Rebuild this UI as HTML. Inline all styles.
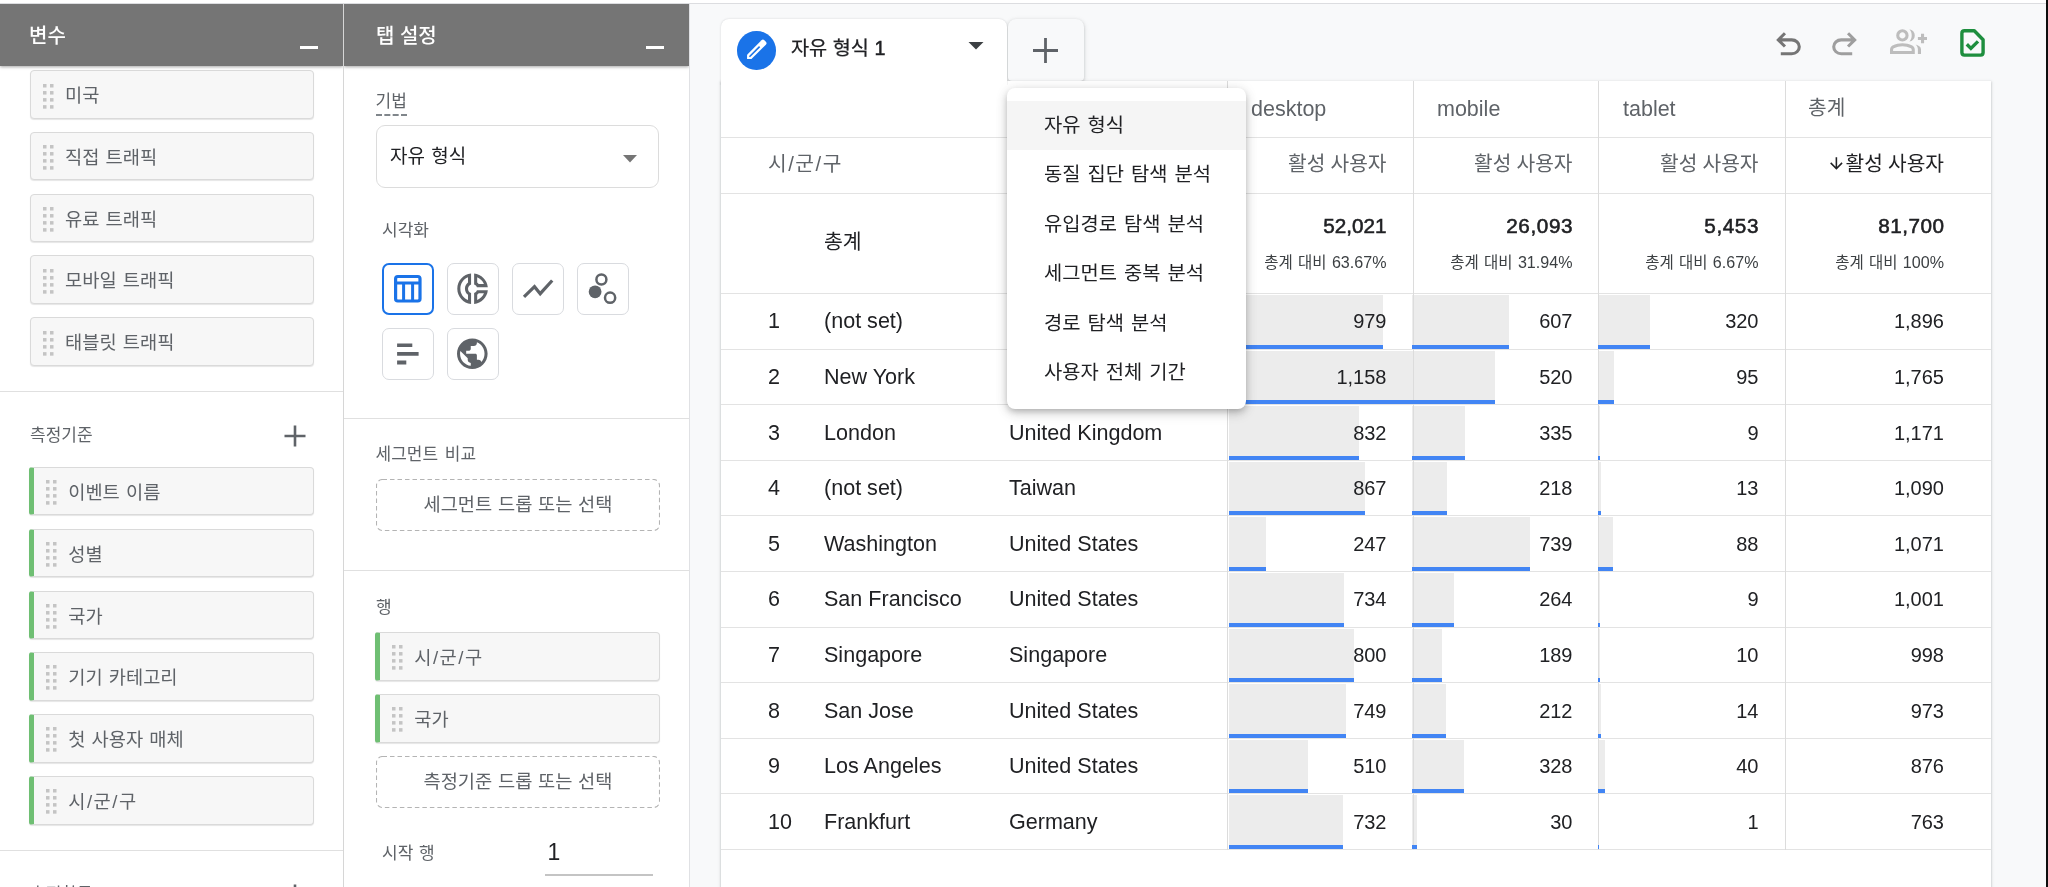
<!DOCTYPE html>
<html lang="ko">
<head>
<meta charset="utf-8">
<title>GA4 탐색 분석</title>
<style>
*{box-sizing:border-box;margin:0;padding:0}
html,body{width:2048px;height:887px;overflow:hidden;background:#fff}
body{position:relative;font-family:"Liberation Sans","Noto Sans CJK KR",sans-serif;color:#202124}
.abs{position:absolute}
#root{position:absolute;left:0;top:0;width:2048px;height:887px;overflow:hidden;will-change:transform}
#topwhite{left:0;top:0;width:2048px;height:3px;background:#fff}
#topline{left:0;top:3px;width:2048px;height:1px;background:#dcdde0}
#rightbg{left:690px;top:4px;width:1358px;height:883px;background:#f8f9fa}
#rightedge{left:2046px;top:0;width:2px;height:887px;background:#0d0d0d}
.panel{top:0;height:887px;background:#fff;overflow:hidden}
#pvar{left:0;width:343px}
#ptab{left:344px;width:345px}
#sep1{left:343px;top:4px;width:1px;height:883px;background:#d6d6d6}
#sep2{left:689px;top:4px;width:1px;height:883px;background:#e0e1e4}
.phead{left:0;top:4.300px;width:100%;height:62px;background:#757575;box-shadow:0 1px 3px rgba(0,0,0,.35)}
.phead .t{left:29px;top:16.700px;font-size:20px;font-weight:500;color:#fff;line-height:30px;white-space:nowrap}
.phead .m{top:41.600px;width:18px;height:3.500px;background:#fff}
.chip{height:48.5px;background:#f7f7f7;border:1px solid #dadada;border-radius:4px;box-shadow:0 1px 1px rgba(0,0,0,.10);font-size:18.7px;word-spacing:1px;color:#5f6368;line-height:46px;white-space:nowrap}
.chip .tx{position:absolute;left:34px;top:2px}
.chip.dim{border-left:5px solid #6fbf73;border-radius:3px 4px 4px 3px}
.chip.dim .tx{left:34.2px}
.dots{position:absolute;left:11.700px;top:12.500px;width:11px;height:25px}
.chip.dim .dots{left:11.500px;top:12px}
.sl{font-style:normal;margin:0 1.5px}
.hr{height:1px;background:#e0e0e0}
.lbl{font-size:17px;color:#5f6368;white-space:nowrap;line-height:24px;word-spacing:1px}
.drop{height:52px;font-size:18.7px;word-spacing:0.5px;color:#5f6368;text-align:center;line-height:52px;white-space:nowrap}
.drop svg{position:absolute;left:0;top:0}
.vbtn{width:52px;height:52px;border:1.500px solid #d9dbdf;border-radius:7px;background:#fff}
.vbtn.sel{border:2px solid #1a73e8}

#card{left:721px;top:81px;width:1270px;height:820px;background:#fff;box-shadow:0 1px 2px rgba(60,64,67,.25),0 1px 3px 1px rgba(60,64,67,.10)}
#tab{left:721px;top:19px;width:286px;height:66px;background:#fff;border-radius:8px 8px 0 0;box-shadow:0 0 2px rgba(60,64,67,.22);clip-path:inset(-4px -1px 0 -4px)}
#ptab2{left:1008px;top:19px;width:76px;height:62px;background:#f8f9fa;border-radius:8px 8px 4px 4px;box-shadow:0 1px 3px rgba(60,64,67,.26),0 2px 6px rgba(60,64,67,.10)}
.hl{left:721px;width:1270px;height:1px;background:#e3e3e3}
.vl{top:81px;width:1px;height:769px;background:#dcdcdc}
.th{font-size:21.5px;color:#5f6368;line-height:30px;white-space:nowrap}
.thk{font-size:20.3px;color:#5f6368;line-height:30px;white-space:nowrap;word-spacing:-0.5px}
.td{font-size:21.55px;color:#202124;line-height:30px;white-space:nowrap}
.num{font-size:20px;color:#202124;line-height:30px;white-space:nowrap;text-align:right}
.tot{font-size:20.7px;color:#202124;line-height:30px;white-space:nowrap;text-align:right;font-weight:400;-webkit-text-stroke:0.55px #202124}
.pct{font-size:15.5px;color:#3c4043;line-height:22px;white-space:nowrap;text-align:right;word-spacing:1px}
.bar{background:#ececec}
.barl{background:#4285f4;height:4px}
#menu{left:1007px;top:88px;width:239px;height:321px;background:#fff;border-radius:8px;box-shadow:0 3px 6px -1px rgba(0,0,0,.22),0 5px 12px 1px rgba(0,0,0,.09),0 1px 14px 0 rgba(0,0,0,.09)}
.mi{left:0;width:239px;height:49.5px;font-size:19.85px;line-height:48px;color:#202124;padding-left:37px;white-space:nowrap;word-spacing:1.5px}
</style>
</head>
<body>
<div id="root">
<div class="abs" id="rightbg"></div>
<div class="abs panel" id="pvar">
<div class="abs chip" style="left:30px;top:70.0px;width:284px"><svg class="dots" viewBox="0 0 11 25" fill="#c4c4c4"><rect x="0" y="0" width="3.500" height="3.500"/><rect x="7" y="0" width="3.500" height="3.500"/><rect x="0" y="7.05" width="3.500" height="3.500"/><rect x="7" y="7.05" width="3.500" height="3.500"/><rect x="0" y="14.1" width="3.500" height="3.500"/><rect x="7" y="14.1" width="3.500" height="3.500"/><rect x="0" y="21.15" width="3.500" height="3.500"/><rect x="7" y="21.15" width="3.500" height="3.500"/></svg><span class="tx">미국</span></div>
<div class="abs chip" style="left:30px;top:131.75px;width:284px"><svg class="dots" viewBox="0 0 11 25" fill="#c4c4c4"><rect x="0" y="0" width="3.500" height="3.500"/><rect x="7" y="0" width="3.500" height="3.500"/><rect x="0" y="7.05" width="3.500" height="3.500"/><rect x="7" y="7.05" width="3.500" height="3.500"/><rect x="0" y="14.1" width="3.500" height="3.500"/><rect x="7" y="14.1" width="3.500" height="3.500"/><rect x="0" y="21.15" width="3.500" height="3.500"/><rect x="7" y="21.15" width="3.500" height="3.500"/></svg><span class="tx">직접 트래픽</span></div>
<div class="abs chip" style="left:30px;top:193.5px;width:284px"><svg class="dots" viewBox="0 0 11 25" fill="#c4c4c4"><rect x="0" y="0" width="3.500" height="3.500"/><rect x="7" y="0" width="3.500" height="3.500"/><rect x="0" y="7.05" width="3.500" height="3.500"/><rect x="7" y="7.05" width="3.500" height="3.500"/><rect x="0" y="14.1" width="3.500" height="3.500"/><rect x="7" y="14.1" width="3.500" height="3.500"/><rect x="0" y="21.15" width="3.500" height="3.500"/><rect x="7" y="21.15" width="3.500" height="3.500"/></svg><span class="tx">유료 트래픽</span></div>
<div class="abs chip" style="left:30px;top:255.25px;width:284px"><svg class="dots" viewBox="0 0 11 25" fill="#c4c4c4"><rect x="0" y="0" width="3.500" height="3.500"/><rect x="7" y="0" width="3.500" height="3.500"/><rect x="0" y="7.05" width="3.500" height="3.500"/><rect x="7" y="7.05" width="3.500" height="3.500"/><rect x="0" y="14.1" width="3.500" height="3.500"/><rect x="7" y="14.1" width="3.500" height="3.500"/><rect x="0" y="21.15" width="3.500" height="3.500"/><rect x="7" y="21.15" width="3.500" height="3.500"/></svg><span class="tx">모바일 트래픽</span></div>
<div class="abs chip" style="left:30px;top:317.0px;width:284px"><svg class="dots" viewBox="0 0 11 25" fill="#c4c4c4"><rect x="0" y="0" width="3.500" height="3.500"/><rect x="7" y="0" width="3.500" height="3.500"/><rect x="0" y="7.05" width="3.500" height="3.500"/><rect x="7" y="7.05" width="3.500" height="3.500"/><rect x="0" y="14.1" width="3.500" height="3.500"/><rect x="7" y="14.1" width="3.500" height="3.500"/><rect x="0" y="21.15" width="3.500" height="3.500"/><rect x="7" y="21.15" width="3.500" height="3.500"/></svg><span class="tx">태블릿 트래픽</span></div>
<div class="abs hr" style="left:0;top:391px;width:343px"></div>
<div class="abs lbl" style="left:30px;top:424px">측정기준</div>
<svg class="abs" style="left:283px;top:424px" width="24" height="24" viewBox="0 0 24 24"><path d="M12 1.5v21M1.5 12h21" stroke="#5f6368" stroke-width="2.6" fill="none"/></svg>
<div class="abs chip dim" style="left:29px;top:466.8px;width:285px"><svg class="dots" viewBox="0 0 11 25" fill="#c4c4c4"><rect x="0" y="0" width="3.500" height="3.500"/><rect x="7" y="0" width="3.500" height="3.500"/><rect x="0" y="7.05" width="3.500" height="3.500"/><rect x="7" y="7.05" width="3.500" height="3.500"/><rect x="0" y="14.1" width="3.500" height="3.500"/><rect x="7" y="14.1" width="3.500" height="3.500"/><rect x="0" y="21.15" width="3.500" height="3.500"/><rect x="7" y="21.15" width="3.500" height="3.500"/></svg><span class="tx">이벤트 이름</span></div>
<div class="abs chip dim" style="left:29px;top:528.65px;width:285px"><svg class="dots" viewBox="0 0 11 25" fill="#c4c4c4"><rect x="0" y="0" width="3.500" height="3.500"/><rect x="7" y="0" width="3.500" height="3.500"/><rect x="0" y="7.05" width="3.500" height="3.500"/><rect x="7" y="7.05" width="3.500" height="3.500"/><rect x="0" y="14.1" width="3.500" height="3.500"/><rect x="7" y="14.1" width="3.500" height="3.500"/><rect x="0" y="21.15" width="3.500" height="3.500"/><rect x="7" y="21.15" width="3.500" height="3.500"/></svg><span class="tx">성별</span></div>
<div class="abs chip dim" style="left:29px;top:590.5px;width:285px"><svg class="dots" viewBox="0 0 11 25" fill="#c4c4c4"><rect x="0" y="0" width="3.500" height="3.500"/><rect x="7" y="0" width="3.500" height="3.500"/><rect x="0" y="7.05" width="3.500" height="3.500"/><rect x="7" y="7.05" width="3.500" height="3.500"/><rect x="0" y="14.1" width="3.500" height="3.500"/><rect x="7" y="14.1" width="3.500" height="3.500"/><rect x="0" y="21.15" width="3.500" height="3.500"/><rect x="7" y="21.15" width="3.500" height="3.500"/></svg><span class="tx">국가</span></div>
<div class="abs chip dim" style="left:29px;top:652.35px;width:285px"><svg class="dots" viewBox="0 0 11 25" fill="#c4c4c4"><rect x="0" y="0" width="3.500" height="3.500"/><rect x="7" y="0" width="3.500" height="3.500"/><rect x="0" y="7.05" width="3.500" height="3.500"/><rect x="7" y="7.05" width="3.500" height="3.500"/><rect x="0" y="14.1" width="3.500" height="3.500"/><rect x="7" y="14.1" width="3.500" height="3.500"/><rect x="0" y="21.15" width="3.500" height="3.500"/><rect x="7" y="21.15" width="3.500" height="3.500"/></svg><span class="tx">기기 카테고리</span></div>
<div class="abs chip dim" style="left:29px;top:714.2px;width:285px"><svg class="dots" viewBox="0 0 11 25" fill="#c4c4c4"><rect x="0" y="0" width="3.500" height="3.500"/><rect x="7" y="0" width="3.500" height="3.500"/><rect x="0" y="7.05" width="3.500" height="3.500"/><rect x="7" y="7.05" width="3.500" height="3.500"/><rect x="0" y="14.1" width="3.500" height="3.500"/><rect x="7" y="14.1" width="3.500" height="3.500"/><rect x="0" y="21.15" width="3.500" height="3.500"/><rect x="7" y="21.15" width="3.500" height="3.500"/></svg><span class="tx">첫 사용자 매체</span></div>
<div class="abs chip dim" style="left:29px;top:776.05px;width:285px"><svg class="dots" viewBox="0 0 11 25" fill="#c4c4c4"><rect x="0" y="0" width="3.500" height="3.500"/><rect x="7" y="0" width="3.500" height="3.500"/><rect x="0" y="7.05" width="3.500" height="3.500"/><rect x="7" y="7.05" width="3.500" height="3.500"/><rect x="0" y="14.1" width="3.500" height="3.500"/><rect x="7" y="14.1" width="3.500" height="3.500"/><rect x="0" y="21.15" width="3.500" height="3.500"/><rect x="7" y="21.15" width="3.500" height="3.500"/></svg><span class="tx">시<i class=sl>/</i>군<i class=sl>/</i>구</span></div>
<div class="abs hr" style="left:0;top:850px;width:343px"></div>
<div class="abs lbl" style="left:30px;top:882.5px">측정항목</div>
<svg class="abs" style="left:283px;top:883px" width="24" height="24" viewBox="0 0 24 24"><path d="M12 1.5v21M1.5 12h21" stroke="#5f6368" stroke-width="2.6" fill="none"/></svg>
<div class="abs phead"><div class="abs t">변수</div><div class="abs m" style="left:300px"></div></div>
</div>
<div class="abs" id="sep1"></div>
<div class="abs panel" id="ptab">
<div class="abs lbl" style="left:31.500px;top:89px;border-bottom:2px dashed #80868b;padding-bottom:0;line-height:25px">기법</div>
<div class="abs" style="left:31.500px;top:125.400px;width:283.500px;height:62.500px;border:1.500px solid #dcdcdc;border-radius:9px;background:#fff"></div>
<div class="abs" style="left:46px;top:141.500px;font-size:19px;word-spacing:1px;line-height:30px;color:#202124;white-space:nowrap">자유 형식</div>
<svg class="abs" style="left:279px;top:155px" width="14" height="8" viewBox="0 0 14 8"><path d="M0 0h14L7 7.500z" fill="#757575"/></svg>
<div class="abs lbl" style="left:38px;top:219px">시각화</div>
<div class="abs vbtn sel" style="left:38px;top:263px"></div>
<svg class="abs" style="left:38px;top:263px" width="52" height="52" viewBox="0 0 52 52"><rect x="13.6" y="13.5" width="24.4" height="24.5" rx="2.2" fill="none" stroke="#1a73e8" stroke-width="3.2"/><path d="M13.6 20.1h24.4M21.6 20.1v17.9M30.6 20.1v17.9" fill="none" stroke="#1a73e8" stroke-width="3"/></svg>
<div class="abs vbtn" style="left:103px;top:263px"></div>
<svg class="abs" style="left:103px;top:263px" width="52" height="52" viewBox="0 0 52 52"><g transform="translate(7.24 7.34) scale(1.53)" fill="#5f6368"><path d="M14.82 11h7.13c-.47-4.72-4.23-8.48-8.95-8.95v7.130c.85.31 1.510.97 1.820 1.820zM15 4.580C17 5.400 18.600 7 19.420 9h-3.430c-.28-.37-.62-.71-.99-.99V4.580zM2 12c0 5.190 3.950 9.450 9 9.950v-7.130C9.840 14.400 9 13.300 9 12c0-1.300.84-2.400 2-2.820V2.050c-5.050.5-9 4.760-9 9.950zm7-7.420v3.440c-1.230.92-2 2.390-2 3.980 0 1.590.77 3.060 2 3.990v3.440C6.040 18.240 4 15.350 4 12c0-3.350 2.040-6.240 5-7.420zM13 14.820v7.130c4.720-.47 8.480-4.230 8.950-8.950h-7.130c-.31.85-.97 1.510-1.820 1.820zM15 15.990c.37-.28.71-.61.99-.99h3.430C18.600 17 17 18.600 15 19.420v-3.430z"/></g></svg>
<div class="abs vbtn" style="left:168px;top:263px"></div>
<svg class="abs" style="left:168px;top:263px" width="52" height="52" viewBox="0 0 52 52"><path d="M12 33.900L22.5 23.7L28.2 30.7L40.2 17.500" fill="none" stroke="#5f6368" stroke-width="3.2" stroke-linejoin="miter"/></svg>
<div class="abs vbtn" style="left:233px;top:263px"></div>
<svg class="abs" style="left:233px;top:263px" width="52" height="52" viewBox="0 0 52 52"><circle cx="18.1" cy="28.8" r="6.4" fill="#5f6368"/><circle cx="24.4" cy="16.5" r="5" fill="none" stroke="#5f6368" stroke-width="2.5"/><circle cx="33.1" cy="34.7" r="5.1" fill="none" stroke="#5f6368" stroke-width="2.5"/></svg>
<div class="abs vbtn" style="left:38px;top:328px"></div>
<svg class="abs" style="left:38px;top:328px" width="52" height="52" viewBox="0 0 52 52"><path d="M15.1 15.4h15.2v3.700H15.100zM15.100 24.1h21.5v3.700H15.100zM15.100 32.600h9.200v3.800H15.100z" fill="#5f6368"/></svg>
<div class="abs vbtn" style="left:103px;top:328px"></div>
<svg class="abs" style="left:103px;top:328px" width="52" height="52" viewBox="0 0 52 52"><g transform="translate(6.94 7.34) scale(1.53)" fill="#5f6368"><path d="M12 2C6.480 2 2 6.480 2 12s4.480 10 10 10 10-4.480 10-10S17.520 2 12 2zm-1 17.930c-3.950-.49-7-3.850-7-7.930 0-.62.08-1.210.21-1.790L9 15v1c0 1.100.9 2 2 2v1.930zm6.900-2.540c-.26-.81-1-1.390-1.900-1.390h-1v-3c0-.55-.45-1-1-1H8v-2h2c.55 0 1-.45 1-1V7h2c1.100 0 2-.9 2-2v-.41c2.930 1.190 5 4.060 5 7.410 0 2.080-.8 3.970-2.100 5.390z"/></g></svg>
<div class="abs hr" style="left:0;top:418px;width:345px"></div>
<div class="abs lbl" style="left:31.500px;top:443px;word-spacing:2px">세그먼트 비교</div>
<div class="abs drop" style="left:32px;top:479px;width:284px"><svg width="284" height="52" viewBox="0 0 284 52"><rect x="0.500" y="0.500" width="283" height="51" rx="6" fill="none" stroke="#b4b4b4" stroke-width="1.100" stroke-dasharray="4.500 3"/></svg>세그먼트 드롭 또는 선택</div>
<div class="abs hr" style="left:0;top:570px;width:345px"></div>
<div class="abs lbl" style="left:32px;top:596px">행</div>
<div class="abs chip dim" style="left:31px;top:632px;width:285px"><svg class="dots" viewBox="0 0 11 25" fill="#c4c4c4"><rect x="0" y="0" width="3.500" height="3.500"/><rect x="7" y="0" width="3.500" height="3.500"/><rect x="0" y="7.05" width="3.500" height="3.500"/><rect x="7" y="7.05" width="3.500" height="3.500"/><rect x="0" y="14.1" width="3.500" height="3.500"/><rect x="7" y="14.1" width="3.500" height="3.500"/><rect x="0" y="21.15" width="3.500" height="3.500"/><rect x="7" y="21.15" width="3.500" height="3.500"/></svg><span class="tx">시<i class=sl>/</i>군<i class=sl>/</i>구</span></div>
<div class="abs chip dim" style="left:31px;top:694px;width:285px"><svg class="dots" viewBox="0 0 11 25" fill="#c4c4c4"><rect x="0" y="0" width="3.500" height="3.500"/><rect x="7" y="0" width="3.500" height="3.500"/><rect x="0" y="7.05" width="3.500" height="3.500"/><rect x="7" y="7.05" width="3.500" height="3.500"/><rect x="0" y="14.1" width="3.500" height="3.500"/><rect x="7" y="14.1" width="3.500" height="3.500"/><rect x="0" y="21.15" width="3.500" height="3.500"/><rect x="7" y="21.15" width="3.500" height="3.500"/></svg><span class="tx">국가</span></div>
<div class="abs drop" style="left:32px;top:755.500px;width:284px"><svg width="284" height="52" viewBox="0 0 284 52"><rect x="0.500" y="0.500" width="283" height="51" rx="6" fill="none" stroke="#b4b4b4" stroke-width="1.100" stroke-dasharray="4.500 3"/></svg>측정기준 드롭 또는 선택</div>
<div class="abs lbl" style="left:38px;top:842px">시작 행</div>
<div class="abs" style="left:203.500px;top:837px;font-size:23px;line-height:30px;color:#202124">1</div>
<div class="abs" style="left:201px;top:874px;width:108px;height:1.500px;background:#c4c4c4"></div>
<div class="abs phead"><div class="abs t" style="left:32px">탭 설정</div><div class="abs m" style="left:302px"></div></div>
</div>
<div class="abs" id="sep2"></div>
<div class="abs" id="ptab2"></div>
<div class="abs" id="card"></div>
<div class="abs" id="tab"></div>
<div class="abs" style="left:737px;top:31px;width:38.6px;height:38.6px;border-radius:50%;background:#1a73e8"></div>
<svg class="abs" style="left:737px;top:31px" width="39" height="39" viewBox="0 0 39 39"><g transform="translate(19.1 19.1) rotate(45)"><path d="M-3.100 -10.700Q-3.100 -12.750 -1.050 -12.750H1.050Q3.100 -12.750 3.100 -10.700V9.650L0 12.750L-3.100 9.650Z" fill="#fff"/><rect x="-0.800" y="-5" width="1.600" height="14.400" fill="#1a73e8"/></g></svg>
<div class="abs" style="left:791px;top:33px;font-size:19.7px;font-weight:400;-webkit-text-stroke:0.25px #202124;color:#202124;line-height:30px;white-space:nowrap;word-spacing:0px">자유 형식 <span style="-webkit-text-stroke:0.5px #202124">1</span></div>
<svg class="abs" style="left:968px;top:42px" width="16" height="8" viewBox="0 0 16 8"><path d="M0.500 0h15L8 7.5z" fill="#3c4043"/></svg>
<svg class="abs" style="left:1032px;top:37.300px" width="27" height="27" viewBox="0 0 27 27"><path d="M13.5 1v25M1 13.5h25" stroke="#5f6368" stroke-width="2.800" fill="none"/></svg>
<div class="abs hl" style="top:137px"></div>
<div class="abs hl" style="top:193px"></div>
<div class="abs hl" style="top:293.0px"></div>
<div class="abs hl" style="top:348.6px"></div>
<div class="abs hl" style="top:404.2px"></div>
<div class="abs hl" style="top:459.8px"></div>
<div class="abs hl" style="top:515.4px"></div>
<div class="abs hl" style="top:571.0px"></div>
<div class="abs hl" style="top:626.6px"></div>
<div class="abs hl" style="top:682.2px"></div>
<div class="abs hl" style="top:737.8px"></div>
<div class="abs hl" style="top:793.4px"></div>
<div class="abs hl" style="top:849.0px"></div>
<div class="abs thk" style="left:768px;top:149px">시<i class=sl>/</i>군<i class=sl>/</i>구</div>
<div class="abs thk" style="left:1009px;top:149px">국가</div>
<div class="abs th" style="left:1251px;top:94px">desktop</div>
<div class="abs th" style="left:1437px;top:94px">mobile</div>
<div class="abs th" style="left:1623px;top:94px">tablet</div>
<div class="abs thk" style="left:1808px;top:93px">총계</div>
<div class="abs thk" style="left:1226.5px;width:160px;text-align:right;top:149px">활성 사용자</div>
<div class="abs thk" style="left:1412.5px;width:160px;text-align:right;top:149px">활성 사용자</div>
<div class="abs thk" style="left:1598.5px;width:160px;text-align:right;top:149px">활성 사용자</div>
<div class="abs thk" style="left:1764px;width:180px;text-align:right;top:149px;color:#202124;font-weight:400">활성 사용자</div>
<svg class="abs" style="left:1826.700px;top:153.500px" width="18.750" height="18.750" viewBox="0 0 24 24"><path d="M20 12l-1.410-1.410L13 16.170V4h-2v12.170l-5.580-5.590L4 12l8 8 8-8z" fill="#202124"/></svg>
<div class="abs td" style="left:824px;top:227px;font-weight:400;font-size:20.5px">총계</div>
<div class="abs tot" style="left:1226.5px;width:160px;top:211px;letter-spacing:0px">52,021</div>
<div class="abs pct" style="left:1216.5px;width:170px;top:251px">총계 대비 <span style="font-size:16.100px">63.67%</span></div>
<div class="abs tot" style="left:1413.1px;width:160px;top:211px;letter-spacing:0.6px">26,093</div>
<div class="abs pct" style="left:1402.5px;width:170px;top:251px">총계 대비 <span style="font-size:16.100px">31.94%</span></div>
<div class="abs tot" style="left:1599.1px;width:160px;top:211px;letter-spacing:0.6px">5,453</div>
<div class="abs pct" style="left:1588.5px;width:170px;top:251px">총계 대비 <span style="font-size:16.100px">6.67%</span></div>
<div class="abs tot" style="left:1784.5px;width:160px;top:211px;letter-spacing:0.5px">81,700</div>
<div class="abs pct" style="left:1774px;width:170px;top:251px">총계 대비 <span style="font-size:16.100px">100%</span></div>
<div class="abs td" style="left:768px;top:306px">1</div>
<div class="abs td" style="left:824px;top:306px">(not set)</div>
<div class="abs td" style="left:1009px;top:306px">United States</div>
<div class="abs bar" style="left:1229.3px;top:295.0px;width:153.7px;height:49.6px"></div>
<div class="abs bar" style="left:1411.9px;top:295.0px;width:97.1px;height:49.6px"></div>
<div class="abs bar" style="left:1598.2px;top:295.0px;width:51.5px;height:49.6px"></div>
<div class="abs num" style="left:1266.5px;width:120px;top:306px">979</div>
<div class="abs num" style="left:1452.5px;width:120px;top:306px">607</div>
<div class="abs num" style="left:1638.5px;width:120px;top:306px">320</div>
<div class="abs num" style="left:1824px;width:120px;top:306px">1,896</div>
<div class="abs td" style="left:768px;top:362px">2</div>
<div class="abs td" style="left:824px;top:362px">New York</div>
<div class="abs td" style="left:1009px;top:362px">United States</div>
<div class="abs bar" style="left:1229.3px;top:350.6px;width:182.4px;height:49.6px"></div>
<div class="abs bar" style="left:1411.9px;top:350.6px;width:83.2px;height:49.6px"></div>
<div class="abs bar" style="left:1598.2px;top:350.6px;width:15.5px;height:49.6px"></div>
<div class="abs num" style="left:1266.5px;width:120px;top:362px">1,158</div>
<div class="abs num" style="left:1452.5px;width:120px;top:362px">520</div>
<div class="abs num" style="left:1638.5px;width:120px;top:362px">95</div>
<div class="abs num" style="left:1824px;width:120px;top:362px">1,765</div>
<div class="abs td" style="left:768px;top:418px">3</div>
<div class="abs td" style="left:824px;top:418px">London</div>
<div class="abs td" style="left:1009px;top:418px">United Kingdom</div>
<div class="abs bar" style="left:1229.3px;top:406.2px;width:130.2px;height:49.6px"></div>
<div class="abs bar" style="left:1411.9px;top:406.2px;width:53.6px;height:49.6px"></div>
<div class="abs bar" style="left:1598.2px;top:406.2px;width:1.7px;height:49.6px"></div>
<div class="abs num" style="left:1266.5px;width:120px;top:418px">832</div>
<div class="abs num" style="left:1452.5px;width:120px;top:418px">335</div>
<div class="abs num" style="left:1638.5px;width:120px;top:418px">9</div>
<div class="abs num" style="left:1824px;width:120px;top:418px">1,171</div>
<div class="abs td" style="left:768px;top:473px">4</div>
<div class="abs td" style="left:824px;top:473px">(not set)</div>
<div class="abs td" style="left:1009px;top:473px">Taiwan</div>
<div class="abs bar" style="left:1229.3px;top:461.8px;width:135.8px;height:49.6px"></div>
<div class="abs bar" style="left:1411.9px;top:461.8px;width:34.9px;height:49.6px"></div>
<div class="abs bar" style="left:1598.2px;top:461.8px;width:2.4px;height:49.6px"></div>
<div class="abs num" style="left:1266.5px;width:120px;top:473px">867</div>
<div class="abs num" style="left:1452.5px;width:120px;top:473px">218</div>
<div class="abs num" style="left:1638.5px;width:120px;top:473px">13</div>
<div class="abs num" style="left:1824px;width:120px;top:473px">1,090</div>
<div class="abs td" style="left:768px;top:529px">5</div>
<div class="abs td" style="left:824px;top:529px">Washington</div>
<div class="abs td" style="left:1009px;top:529px">United States</div>
<div class="abs bar" style="left:1229.3px;top:517.4px;width:36.6px;height:49.6px"></div>
<div class="abs bar" style="left:1411.9px;top:517.4px;width:118.2px;height:49.6px"></div>
<div class="abs bar" style="left:1598.2px;top:517.4px;width:14.4px;height:49.6px"></div>
<div class="abs num" style="left:1266.5px;width:120px;top:529px">247</div>
<div class="abs num" style="left:1452.5px;width:120px;top:529px">739</div>
<div class="abs num" style="left:1638.5px;width:120px;top:529px">88</div>
<div class="abs num" style="left:1824px;width:120px;top:529px">1,071</div>
<div class="abs td" style="left:768px;top:584px">6</div>
<div class="abs td" style="left:824px;top:584px">San Francisco</div>
<div class="abs td" style="left:1009px;top:584px">United States</div>
<div class="abs bar" style="left:1229.3px;top:573.0px;width:114.5px;height:49.6px"></div>
<div class="abs bar" style="left:1411.9px;top:573.0px;width:42.2px;height:49.6px"></div>
<div class="abs bar" style="left:1598.2px;top:573.0px;width:1.7px;height:49.6px"></div>
<div class="abs num" style="left:1266.5px;width:120px;top:584px">734</div>
<div class="abs num" style="left:1452.5px;width:120px;top:584px">264</div>
<div class="abs num" style="left:1638.5px;width:120px;top:584px">9</div>
<div class="abs num" style="left:1824px;width:120px;top:584px">1,001</div>
<div class="abs td" style="left:768px;top:640px">7</div>
<div class="abs td" style="left:824px;top:640px">Singapore</div>
<div class="abs td" style="left:1009px;top:640px">Singapore</div>
<div class="abs bar" style="left:1229.3px;top:628.6px;width:125.1px;height:49.6px"></div>
<div class="abs bar" style="left:1411.9px;top:628.6px;width:30.2px;height:49.6px"></div>
<div class="abs bar" style="left:1598.2px;top:628.6px;width:1.9px;height:49.6px"></div>
<div class="abs num" style="left:1266.5px;width:120px;top:640px">800</div>
<div class="abs num" style="left:1452.5px;width:120px;top:640px">189</div>
<div class="abs num" style="left:1638.5px;width:120px;top:640px">10</div>
<div class="abs num" style="left:1824px;width:120px;top:640px">998</div>
<div class="abs td" style="left:768px;top:696px">8</div>
<div class="abs td" style="left:824px;top:696px">San Jose</div>
<div class="abs td" style="left:1009px;top:696px">United States</div>
<div class="abs bar" style="left:1229.3px;top:684.2px;width:116.9px;height:49.6px"></div>
<div class="abs bar" style="left:1411.9px;top:684.2px;width:33.9px;height:49.6px"></div>
<div class="abs bar" style="left:1598.2px;top:684.2px;width:2.5px;height:49.6px"></div>
<div class="abs num" style="left:1266.5px;width:120px;top:696px">749</div>
<div class="abs num" style="left:1452.5px;width:120px;top:696px">212</div>
<div class="abs num" style="left:1638.5px;width:120px;top:696px">14</div>
<div class="abs num" style="left:1824px;width:120px;top:696px">973</div>
<div class="abs td" style="left:768px;top:751px">9</div>
<div class="abs td" style="left:824px;top:751px">Los Angeles</div>
<div class="abs td" style="left:1009px;top:751px">United States</div>
<div class="abs bar" style="left:1229.3px;top:739.8px;width:78.7px;height:49.6px"></div>
<div class="abs bar" style="left:1411.9px;top:739.8px;width:52.5px;height:49.6px"></div>
<div class="abs bar" style="left:1598.2px;top:739.8px;width:6.7px;height:49.6px"></div>
<div class="abs num" style="left:1266.5px;width:120px;top:751px">510</div>
<div class="abs num" style="left:1452.5px;width:120px;top:751px">328</div>
<div class="abs num" style="left:1638.5px;width:120px;top:751px">40</div>
<div class="abs num" style="left:1824px;width:120px;top:751px">876</div>
<div class="abs td" style="left:768px;top:807px">10</div>
<div class="abs td" style="left:824px;top:807px">Frankfurt</div>
<div class="abs td" style="left:1009px;top:807px">Germany</div>
<div class="abs bar" style="left:1229.3px;top:795.4px;width:114.2px;height:49.6px"></div>
<div class="abs bar" style="left:1411.9px;top:795.4px;width:4.8px;height:49.6px"></div>
<div class="abs bar" style="left:1598.2px;top:795.4px;width:1.2px;height:49.6px"></div>
<div class="abs num" style="left:1266.5px;width:120px;top:807px">732</div>
<div class="abs num" style="left:1452.5px;width:120px;top:807px">30</div>
<div class="abs num" style="left:1638.5px;width:120px;top:807px">1</div>
<div class="abs num" style="left:1824px;width:120px;top:807px">763</div>
<div class="abs vl" style="left:1227px"></div>
<div class="abs vl" style="left:1413px"></div>
<div class="abs vl" style="left:1598px"></div>
<div class="abs vl" style="left:1785px"></div>
<div class="abs barl" style="left:1229.3px;top:344.5px;width:153.7px"></div>
<div class="abs barl" style="left:1411.9px;top:344.5px;width:97.1px"></div>
<div class="abs barl" style="left:1598.2px;top:344.5px;width:51.5px"></div>
<div class="abs barl" style="left:1229.3px;top:400.1px;width:182.4px"></div>
<div class="abs barl" style="left:1411.9px;top:400.1px;width:83.2px"></div>
<div class="abs barl" style="left:1598.2px;top:400.1px;width:15.5px"></div>
<div class="abs barl" style="left:1229.3px;top:455.7px;width:130.2px"></div>
<div class="abs barl" style="left:1411.9px;top:455.7px;width:53.6px"></div>
<div class="abs barl" style="left:1598.2px;top:455.7px;width:1.7px"></div>
<div class="abs barl" style="left:1229.3px;top:511.3px;width:135.8px"></div>
<div class="abs barl" style="left:1411.9px;top:511.3px;width:34.9px"></div>
<div class="abs barl" style="left:1598.2px;top:511.3px;width:2.4px"></div>
<div class="abs barl" style="left:1229.3px;top:566.9px;width:36.6px"></div>
<div class="abs barl" style="left:1411.9px;top:566.9px;width:118.2px"></div>
<div class="abs barl" style="left:1598.2px;top:566.9px;width:14.4px"></div>
<div class="abs barl" style="left:1229.3px;top:622.5px;width:114.5px"></div>
<div class="abs barl" style="left:1411.9px;top:622.5px;width:42.2px"></div>
<div class="abs barl" style="left:1598.2px;top:622.5px;width:1.7px"></div>
<div class="abs barl" style="left:1229.3px;top:678.1px;width:125.1px"></div>
<div class="abs barl" style="left:1411.9px;top:678.1px;width:30.2px"></div>
<div class="abs barl" style="left:1598.2px;top:678.1px;width:1.9px"></div>
<div class="abs barl" style="left:1229.3px;top:733.7px;width:116.9px"></div>
<div class="abs barl" style="left:1411.9px;top:733.7px;width:33.9px"></div>
<div class="abs barl" style="left:1598.2px;top:733.7px;width:2.5px"></div>
<div class="abs barl" style="left:1229.3px;top:789.3px;width:78.7px"></div>
<div class="abs barl" style="left:1411.9px;top:789.3px;width:52.5px"></div>
<div class="abs barl" style="left:1598.2px;top:789.3px;width:6.7px"></div>
<div class="abs barl" style="left:1229.3px;top:844.9px;width:114.2px"></div>
<div class="abs barl" style="left:1411.9px;top:844.9px;width:4.8px"></div>
<div class="abs barl" style="left:1598.2px;top:844.9px;width:1.2px"></div>
<svg class="abs" style="left:1770.2px;top:26.4px" width="37" height="37" viewBox="0 0 24 24"><path d="M7 19v-2h7.100q1.575 0 2.738-1T18 13.500t-1.162-2.500T14.100 10H7.800l2.600 2.600L9 14 4 9l5-5 1.400 1.400L7.800 8h6.300q2.425 0 4.163 1.575T20 13.500t-1.737 3.925T14.100 19z" fill="#757575"/></svg>
<svg class="abs" style="left:1825.5px;top:26.4px" width="37" height="37" viewBox="0 0 24 24"><path d="M9.900 19q-2.425 0-4.163-1.575T4 13.500t1.737-3.925T9.900 8h6.300l-2.600-2.600L15 4l5 5-5 5-1.400-1.400 2.600-2.600H9.900q-1.575 0-2.737 1T6 13.500 7.163 16 9.900 17H17v2z" fill="#9e9e9e"/></svg>
<svg class="abs" style="left:1890.3px;top:22.8px" width="37.200" height="37.200" viewBox="0 0 24 24"><path d="M12.500 11.950q.725-.8 1.113-1.825T14 8t-.387-2.125T12.500 4.050q1.500.2 2.500 1.325T16 8t-1 2.625-2.500 1.325M18 20v-3q0-.9-.4-1.713t-1.050-1.437q1.275.45 2.363 1.163T20 17v3zm2-7v-2h-2V9h2V7h2v2h2v2h-2v2zM8 12q-1.650 0-2.825-1.175T4 8t1.175-2.825T8 4t2.825 1.175T12 8t-1.175 2.825T8 12m-8 8v-2.800q0-.85.438-1.563T1.600 14.550q1.550-.775 3.150-1.163T8 13t3.250.388 3.150 1.162q.725.375 1.163 1.088T16 17.200V20zm8-10q.825 0 1.413-.587T10 8t-.587-1.412T8 6t-1.412.588T6 8t.588 1.413T8 10m-6 8h12v-.8q0-.275-.137-.5t-.363-.35q-1.350-.675-2.725-1.012T8 15t-2.775.338T2.500 16.350q-.225.125-.363.350T2 17.200zm6 0" fill="#bdbdbd"/></svg>
<svg class="abs" style="left:1955px;top:24px" width="36" height="38" viewBox="0 0 36 38"><path d="M9.400 6.700H19.300L28.100 15.700V28.600Q28.100 31.100 25.600 31.100H9.400Q6.900 31.100 6.900 28.600V9.200Q6.900 6.700 9.400 6.700Z" fill="none" stroke="#1e8e3e" stroke-width="3.400" stroke-linejoin="round"/><path d="M11.800 20.300L15.900 24.400L23 17.400" fill="none" stroke="#1e8e3e" stroke-width="3.400"/></svg>
<div class="abs" id="menu">
<div class="abs mi" style="top:12.5px;background:#f5f5f5">자유 형식</div>
<div class="abs mi" style="top:62.0px">동질 집단 탐색 분석</div>
<div class="abs mi" style="top:111.5px">유입경로 탐색 분석</div>
<div class="abs mi" style="top:161.0px">세그먼트 중복 분석</div>
<div class="abs mi" style="top:210.5px">경로 탐색 분석</div>
<div class="abs mi" style="top:260.0px">사용자 전체 기간</div>
</div>
<div class="abs" id="topwhite"></div><div class="abs" id="topline"></div>
<div class="abs" id="rightedge"></div>
</div>
</body>
</html>
